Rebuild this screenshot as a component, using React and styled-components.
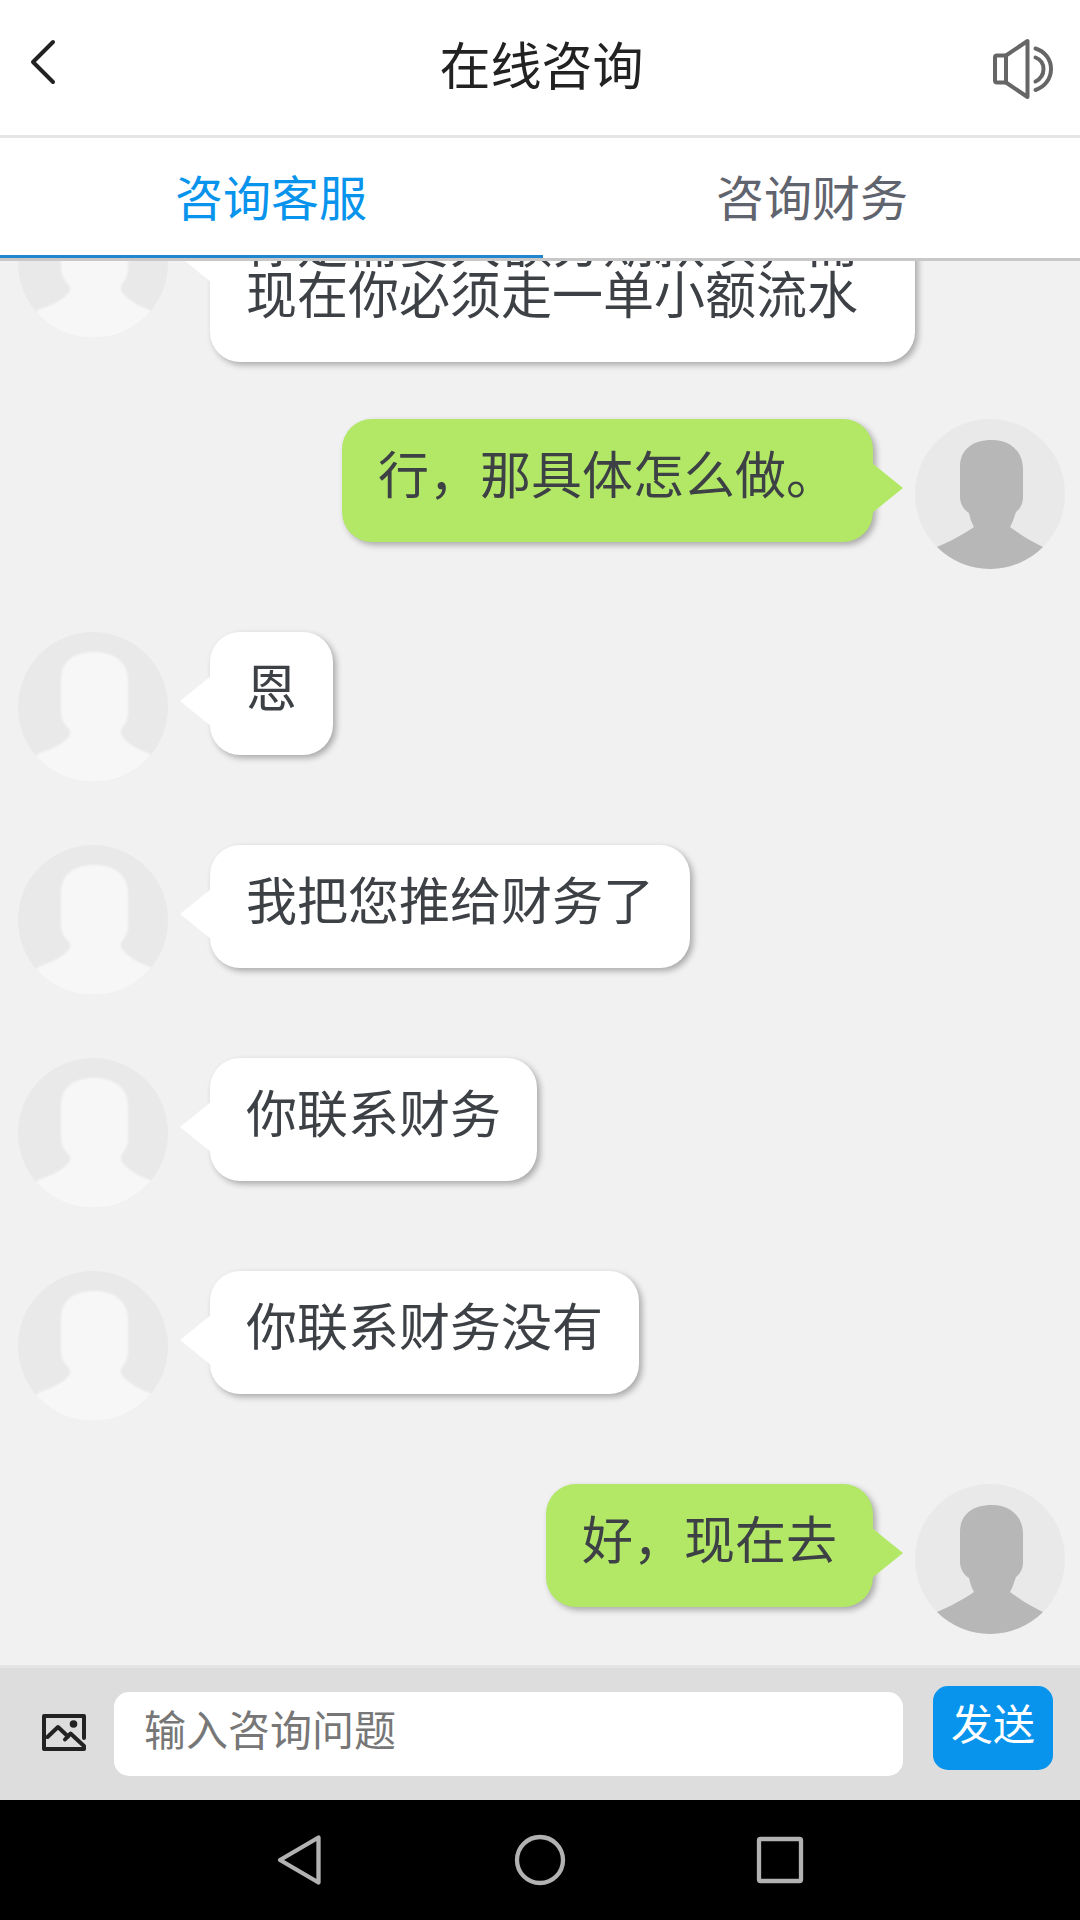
import React from 'react';
import styled, { createGlobalStyle } from 'styled-components';

const messages = [
	{ id: 1, text: '你是需要大额分期款项，而现在你必须走一单小额流水' },
	{ id: 2, text: '行，那具体怎么做。', mine: true },
	{ id: 3, text: '恩' },
	{ id: 4, text: '我把您推给财务了' },
	{ id: 5, text: '你联系财务' },
	{ id: 6, text: '你联系财务没有' },
	{ id: 7, text: '好，现在去', mine: true },
];

const BackIcon = () => (
	<svg width="28" height="48" viewBox="0 0 28 48" fill="none" stroke="#222" strokeWidth="4" strokeLinecap="round" strokeLinejoin="round">
		<path d="M24 4L4 24L24 44" />
	</svg>
);

const SpeakerIcon = () => (
	<svg width="62" height="62" viewBox="-1 -1 62 62" fill="none" stroke="#666" strokeWidth="4" strokeLinecap="round" strokeLinejoin="round">
		<path d="M13 16.5H4Q2 16.5 2 18.5V41.5Q2 43.5 4 43.5H13Z" />
		<path d="M13 16.5L34.5 2V58L13 43.5Z" />
		<path d="M42.5 9.5C52 12.5 58 20.5 58 30C58 39.5 52 48 42.5 51" />
		<path d="M42.5 18.5C47.5 20.5 50.5 25 50.5 30C50.5 35.5 47.5 40 42.5 42.5" />
	</svg>
);

const ImageIcon = () => (
	<svg width="46" height="40" viewBox="0 0 46 40" fill="none" stroke="#222" strokeWidth="4" strokeLinecap="round" strokeLinejoin="round">
		<path d="M43 25V3H3V36H43V33L29.5 20.5L24 26.5" />
		<path d="M6.5 24L17 14L27 23.5" />
		<circle cx="32.5" cy="11" r="3.8" fill="#222" stroke="none" />
	</svg>
);

const Avatar = ({ mine }) => (
	<AvatarCircle $mine={mine} viewBox="0 0 150 150">
		{mine ? (
			<path d="M45 48C45 31 57 21 77 21C96 21 108 33 108 50V78C108 85 105 90 101 93C99 98 98 103 95 108C102 113 112 120 128 128L150 150H0L22 128C36 122 47 116 59 108C56 103 55 98 54 94C49 91 45 85 45 78Z" />
		) : (
			<path d="M43 48C43 29 56 20 76 20C96 20 110 30 110 48V80C110 88 107 93 103 97V103C108 110 118 117 132 122L150 150H0L20 122C34 117 47 111 52 103V98C47 93 43 88 43 80Z" />
		)}
	</AvatarCircle>
);

const App = () => {
	return (
		<Screen>
			<GlobalStyle />
			<Header>
				<BackIcon />
				<h1>在线咨询</h1>
				<SpeakerIcon />
			</Header>

			<Tabs>
				<Tab $active>咨询客服</Tab>
				<Tab>咨询财务</Tab>
			</Tabs>

			<Chat>
				{messages.map(({ id, text, mine }) => (
					<Message key={id} $mine={mine}>
						<Avatar mine={mine} />
						<Bubble $mine={mine}>{text}</Bubble>
					</Message>
				))}
			</Chat>

			<InputBar>
				<ImageIcon />
				<Input placeholder="输入咨询问题" />
				<SendButton>发送</SendButton>
			</InputBar>

			<SystemNav>
				<svg width="50" height="54" viewBox="0 0 50 54">
					<path d="M43.5 4.5V49.5L5 27Z" />
				</svg>
				<svg width="54" height="54" viewBox="0 0 54 54">
					<circle cx="27" cy="27" r="23" />
				</svg>
				<svg width="50" height="54" viewBox="0 0 50 54">
					<rect x="4" y="6" width="42" height="42" rx="1.5" />
				</svg>
			</SystemNav>
		</Screen>
	);
};

const GlobalStyle = createGlobalStyle`
	* {
		box-sizing: border-box;
	}

	body {
		margin: 0;
		font-family: 'Noto Sans CJK SC', sans-serif;
	}
`;

const Screen = styled.div`
	display: grid;
	width: 1080px;
	height: 1920px;
	grid-template-rows: 138px 123px 1404px 135px 120px;
	overflow: hidden;
	background-color: #f1f1f1;
`;

const Header = styled.header`
	display: flex;
	justify-content: space-between;
	align-items: flex-start;
	padding: 38px 26px 0 29px;
	background-color: #fff;
	border-bottom: 3px solid #e5e5e5;

	h1 {
		margin: 0 0 0 34px;
		color: #222;
		font-size: 51px;
		font-weight: 400;
		line-height: 51px;
	}
`;

const Tabs = styled.nav`
	display: grid;
	grid-template-columns: 543px 537px;
	background-color: #fff;
	border-bottom: 3px solid #c8c8c8;
`;

const Tab = styled.a`
	padding: ${({ $active }) => ($active ? '0 1px 0 0' : '0 0 0 1px')};
	color: ${({ $active }) => ($active ? '#0894ec' : '#5f646e')};
	border-bottom: 3px solid ${({ $active }) => ($active ? '#2087cf' : 'transparent')};
	font-size: 48px;
	line-height: 115px;
	text-align: center;
`;

const Chat = styled.main`
	display: flex;
	flex-direction: column;
	justify-content: flex-end;
	gap: 57px;
	padding: 0 15px 25px 18px;
	overflow: hidden;
`;

const Message = styled.div`
	display: flex;
	flex-direction: ${({ $mine }) => ($mine ? 'row-reverse' : 'row')};
	align-items: flex-start;
	flex-shrink: 0;
	gap: 42px;
	min-height: 156px;
`;

const AvatarCircle = styled.svg`
	flex-shrink: 0;
	width: 150px;
	height: 150px;
	border-radius: 50%;
	background-color: #e9e9e9;
	fill: ${({ $mine }) => ($mine ? '#b7b7b7' : '#f7f7f7')};

	path {
		filter: blur(${({ $mine }) => ($mine ? '0.7px' : '1.2px')});
	}
`;

const Bubble = styled.div`
	position: relative;
	max-width: 705px;
	padding: 28px 36px 44px;
	color: #3d4145;
	background-color: ${({ $mine }) => ($mine ? '#b2e866' : '#fff')};
	border-radius: 30px;
	box-shadow: 3px 3px 6px rgba(0, 0, 0, 0.3);
	font-size: 51px;
	line-height: 51px;

	&::after {
		content: '';
		width: 31px;
		height: 50px;
		background-color: inherit;
		position: absolute;
		top: 44px;
		${({ $mine }) => ($mine ? 'left: calc(100% - 1px)' : 'right: calc(100% - 1px)')};
		clip-path: ${({ $mine }) => ($mine ? 'polygon(0 0, 100% 50%, 0 100%)' : 'polygon(100% 0, 0 50%, 100% 100%)')};
	}
`;

const InputBar = styled.footer`
	display: flex;
	align-items: flex-start;
	padding: 18px 27px 0 41px;
	background-color: #ddd;
	border-top: 3px solid #e5e5e5;

	svg {
		margin-top: 27px;
	}
`;

const Input = styled.input`
	width: 789px;
	height: 84px;
	margin: 6px 30px 0 27px;
	padding: 0 30px 14px;
	border: 0;
	border-radius: 15px;
	background-color: #fff;
	font-family: inherit;
	font-size: 42px;

	&::placeholder {
		color: #777;
		opacity: 1;
	}
`;

const SendButton = styled.button`
	width: 120px;
	height: 84px;
	padding: 0 0 12px;
	border: 0;
	border-radius: 15px;
	color: #fff;
	background-color: #0894ec;
	font-family: inherit;
	font-size: 42px;
	line-height: 72px;
`;

const SystemNav = styled.div`
	display: flex;
	justify-content: center;
	align-items: center;
	gap: 188px;
	background-color: #000;

	svg {
		fill: none;
		stroke: #b2b2b2;
		stroke-width: 4.3px;
		stroke-linejoin: round;
	}
`;

export default App;
